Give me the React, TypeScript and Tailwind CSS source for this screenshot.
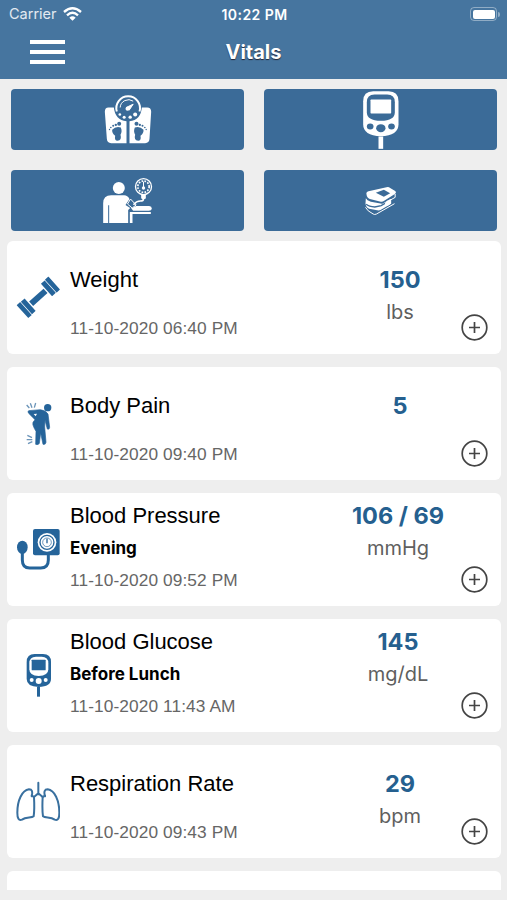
import type { ReactNode } from "react";

type Vital = {
  name: string;
  note?: string;
  date: string;
  value: string;
  unit?: string;
  icon: ReactNode;
};

function ScaleIcon() {
  return (
    <svg className="h-[60px] w-[60px]" viewBox="22.5 13.5 180 180" aria-hidden="true">
      <path
        fill="#fff"
        d="M54 66H70Q74 104 108 107V173H62Q50 173 49 160L43 79Q43 66 54 66ZM154 66H170Q182 66 182 79L177 160Q176 173 164 173H117V107Q151 104 154 66Z"
      />
      <path d="M79 78A35.500 35.500 0 1 1 147 78" fill="none" stroke="#fff" strokeWidth="6" />
      <path d="M89 66A25 25 0 0 1 128 47" fill="none" stroke="#fff" strokeWidth="3" />
      <path d="M107 66L128 56L116 74Z" fill="#fff" stroke="#fff" strokeWidth="3" strokeLinejoin="round" />
      <circle cx="111" cy="70" r="6" fill="#fff" />
      <g fill="#fff">
        <circle cx="88" cy="87" r="4" />
        <circle cx="101" cy="95" r="4.500" />
        <circle cx="119" cy="95" r="5" />
        <circle cx="134" cy="87" r="6" />
      </g>
      <g id="foot" fill="#3b6b98">
        <path d="M65 133Q76 121 91 126Q96 138 90 148Q95 165 81 166Q71 166 74 151Q64 144 65 133Z" />
        <circle cx="86" cy="115" r="6" />
        <circle cx="76" cy="118" r="3.5" />
        <circle cx="68" cy="121" r="3" />
        <circle cx="61" cy="126" r="2.5" />
        <circle cx="57" cy="132" r="2" />
      </g>
      <use href="#foot" transform="translate(224 0) scale(-1 1)" />
    </svg>
  );
}

function MeterIcon() {
  return (
    <svg className="h-[60px] w-[60px]" viewBox="31.5 13.5 180 180" aria-hidden="true">
      <path d="M68 47Q68 17 98 17H144Q174 17 174 47V116Q174 150 121 152Q68 150 68 116Z" fill="#fff" />
      <path d="M79 50Q79 27 102 27H140Q163 27 163 50V80Q163 105 121 106Q79 105 79 80Z" fill="#3b6b98" />
      <rect x="90" y="42" width="62" height="42" rx="2" fill="#fff" />
      <g fill="#3b6b98">
        <ellipse cx="89" cy="123" rx="10" ry="9" />
        <ellipse cx="121" cy="128" rx="14" ry="12" />
        <ellipse cx="153" cy="123" rx="10" ry="9" />
      </g>
      <path d="M114 153H128V190H114Z" fill="#fff" />
    </svg>
  );
}

function CuffPatientIcon() {
  return (
    <svg className="h-[60px] w-[60px]" viewBox="22.5 15 180 180" aria-hidden="true">
      <g fill="#fff">
        <circle cx="85" cy="66" r="18" />
        <path d="M38 112Q38 88 62 88H101Q111 88 117 99L105 117L119 126L113 132V171H56V118H53V171H38Z" />
        <path d="M122 127L137 120H176Q184 121 184 128Q183 134 175 134H128Z" />
        <path d="M118 138H181V144H126V171H118Z" />
        <path d="M120 99L137 117L125 126L111 114Z" fill="#3b6b98" stroke="#fff" strokeWidth="3" />
      </g>
      <g fill="none" stroke="#fff">
        <circle cx="159" cy="62" r="24" strokeWidth="4" />
        <circle cx="159" cy="62" r="17" strokeWidth="5" strokeDasharray="5 4" />
        <path d="M159 68V47" strokeWidth="3" />
        <path d="M159 88V98Q159 105 149 105Q138 105 129 116" strokeWidth="5" />
      </g>
      <circle cx="159" cy="66" r="5" fill="#fff" />
      <rect x="152" y="84" width="14" height="15" rx="4" fill="#fff" />
    </svg>
  );
}

function OximeterIcon() {
  return (
    <svg className="h-[60px] w-[60px]" viewBox="31.5 15 180 180" aria-hidden="true">
      <path d="M78 85Q76 79 84 76L138 64Q144 62 149 66L164 75Q169 79 163 84L130 105Q126 108 121 107L88 99Q79 96 78 85Z" fill="#fff" />
      <path d="M106 80L130 71L149 82L130 92Z" fill="#3b6b98" />
      <path d="M76 97Q79 104 91 107L124 113Q128 114 133 109L152 98V113L120 132Q116 134 110 133L86 128Q77 125 75 113Z" fill="#fff" />
      <path d="M77 115Q85 122 103 123L122 119L146 105" fill="none" stroke="#3b6b98" strokeWidth="4" />
      <path d="M133 111Q139 103 150 100L151 111Q145 121 136 120Z" fill="#fff" />
      <path d="M75 124Q80 135 98 144Q102 147 108 144L162 113" fill="none" stroke="#fff" strokeWidth="3" />
      <path d="M164 84V94L150 102" fill="none" stroke="#fff" strokeWidth="3" />
    </svg>
  );
}

function DumbbellIcon() {
  return (
    <svg className="h-11 w-11" viewBox="48 120 132 132" fill="#25649a" aria-hidden="true">
      <g transform="translate(115 187) rotate(-42)">
        <rect x="-29" y="-9" width="58" height="18" />
        <rect x="-48" y="-25" width="15" height="50" rx="1" />
        <rect x="-64" y="-26" width="14" height="52" rx="1" />
        <rect x="33" y="-25" width="15" height="50" rx="1" />
        <rect x="50" y="-26" width="14" height="52" rx="1" />
      </g>
    </svg>
  );
}

function BodyPainIcon() {
  return (
    <svg className="h-11 w-11" viewBox="48 33 132 132" fill="#25649a" aria-hidden="true">
      <circle cx="143" cy="53" r="11" />
      <path d="M86 62L121 59Q138 61 144 72L149 112Q148 120 142 117L135 91L134 111L138 157Q137 165 129 163L122 129L118 160Q115 167 107 163L108 124Q102 115 99 105Q96 97 105 89L86 70Q82 65 86 62Z" stroke="#25649a" strokeWidth="2" />
      <path d="M101 72L111 71L107 79Z" fill="#fff" />
      <path d="M80 45L88 54M91 40L96 53M107 39L103 53M82 136L96 143M80 149L97 149M84 161L97 155" fill="none" stroke="#6c95b9" strokeWidth="4" />
    </svg>
  );
}

function PressureIcon() {
  return (
    <svg className="h-11 w-11" viewBox="48 111 132 132" fill="none" aria-hidden="true">
      <rect x="99" y="117" width="80" height="79" rx="6" fill="#25649a" />
      <circle cx="141" cy="157" r="28" fill="#fff" />
      <circle cx="141" cy="157" r="21" stroke="#25649a" strokeWidth="4" />
      <circle cx="141" cy="157" r="13" stroke="#25649a" strokeWidth="2" />
      <path d="M141 146V160" stroke="#25649a" strokeWidth="4" />
      <ellipse cx="67" cy="172" rx="16" ry="20" fill="#25649a" />
      <path d="M67 188V210Q67 234 89 234H122Q145 234 145 210V195" stroke="#25649a" strokeWidth="9" />
    </svg>
  );
}

function GlucoseIcon() {
  return (
    <svg className="h-11 w-11" viewBox="48 114 132 132" aria-hidden="true">
      <path d="M80 141Q80 117 104 117H129Q153 117 153 141V192Q153 215 116 216Q80 215 80 192Z" fill="#25649a" />
      <path d="M88 145Q88 125 108 125H125Q145 125 145 145V163Q145 182 116 183Q88 182 88 163Z" fill="#fff" />
      <rect x="95" y="134" width="42" height="32" rx="2" fill="#25649a" />
      <g fill="#fff">
        <circle cx="95" cy="195" r="6" />
        <circle cx="116" cy="198" r="9" />
        <circle cx="137" cy="195" r="6" />
      </g>
      <path d="M111 216H120V245H111Z" fill="#25649a" />
    </svg>
  );
}

function LungsIcon() {
  return (
    <svg className="h-11 w-11" viewBox="48 27 132 132" aria-hidden="true">
      <g fill="none" stroke="#39709f" strokeWidth="6" strokeLinejoin="round" strokeLinecap="round">
        <path d="M115 38V73M115 70L102 81M115 70L128 81" />
        <path d="M95 79Q101 58 87 58C66 61 52 91 52 128C52 145 56 153 66 149C78 140 94 145 101 139Q104 119 102 81L95 76" />
        <path d="M135 79Q129 58 143 58C164 61 178 91 178 128C178 145 174 153 164 149C152 140 136 145 129 139Q126 119 128 81L135 76" />
      </g>
    </svg>
  );
}

const devices = [
  { label: "Scale", icon: <ScaleIcon /> },
  { label: "Glucose meter", icon: <MeterIcon /> },
  { label: "Blood pressure cuff", icon: <CuffPatientIcon /> },
  { label: "Pulse oximeter", icon: <OximeterIcon /> },
];

const vitals: Vital[] = [
  { name: "Weight", date: "11-10-2020 06:40 PM", value: "150", unit: "lbs", icon: <DumbbellIcon /> },
  { name: "Body Pain", date: "11-10-2020 09:40 PM", value: "5", icon: <BodyPainIcon /> },
  { name: "Blood Pressure", note: "Evening", date: "11-10-2020 09:52 PM", value: "106 / 69", unit: "mmHg", icon: <PressureIcon /> },
  { name: "Blood Glucose", note: "Before Lunch", date: "11-10-2020 11:43 AM", value: "145", unit: "mg/dL", icon: <GlucoseIcon /> },
  { name: "Respiration Rate", date: "11-10-2020 09:43 PM", value: "29", unit: "bpm", icon: <LungsIcon /> },
];

function StatusBar() {
  return (
    <div className="grid h-7 grid-cols-3 items-center pr-[7px] pl-[9px] text-white">
      <div className="flex items-center gap-[6px]">
        <span className="text-[14.5px] text-white/85">Carrier</span>
        <svg className="h-[14px] w-[19px]" viewBox="0 0 57 42" fill="none" stroke="#fff" strokeWidth="7" aria-hidden="true">
          <path d="M3 15Q28.500 -7 54 15M12 25Q28.500 10 45 25" />
          <path d="M19 32Q28.500 24 38 32L28.500 41Z" fill="#fff" stroke="none" />
        </svg>
      </div>
      <span className="text-center text-[14px] font-semibold tracking-[0.45px] whitespace-nowrap">10:22 PM</span>
      <div className="flex items-center justify-end gap-px">
        <span className="flex h-[14px] w-[27px] items-center justify-center rounded-[4px] border border-white/40">
          <span className="h-[9px] w-[22px] rounded-[2px] bg-white" />
        </span>
        <span className="h-[5px] w-[2px] rounded-r-full bg-white/40" />
      </div>
    </div>
  );
}

function VitalCard({ vital }: { vital: Vital }) {
  const detailed = Boolean(vital.note);

  return (
    <article className="flex h-[113.500px] shrink-0 rounded-[6px] bg-white">
      <div className="w-[63px] shrink-0 pt-[34px] pl-[9px]">{vital.icon}</div>
      <div className={detailed ? "w-[269px] shrink-0 pt-[7px]" : "w-[269px] shrink-0 pt-[15px]"}>
        <h2
          className={[
            "font-['Liberation_Sans',sans-serif] text-[22px] whitespace-nowrap text-black",
            detailed ? "leading-8" : "leading-[48px]",
          ].join(" ")}
        >
          {vital.name}
        </h2>
        {vital.note && <p className="text-[17px] leading-8 font-bold text-black">{vital.note}</p>}
        <p
          className={[
            "font-['Liberation_Sans',sans-serif] text-[17.300px] tracking-[0.1px] whitespace-nowrap text-[#666]",
            detailed ? "leading-8" : "leading-[48px]",
          ].join(" ")}
        >
          {vital.date}
        </p>
      </div>
      <div
        className={[
          "shrink-0 text-center whitespace-nowrap",
          detailed ? "w-[118px] pt-[6px] leading-[33px]" : "w-[122px] pt-[22px] leading-[33px]",
        ].join(" ")}
      >
        <p className="text-[23.500px] font-bold text-[#25608f]">{vital.value}</p>
        {vital.unit && <p className="text-[20px] text-[#5f5f5f]">{vital.unit}</p>}
      </div>
      <button
        type="button"
        aria-label="Add"
        className="mt-[73px] mr-[13px] ml-auto h-[27px] w-[27px] shrink-0"
      >
        <svg viewBox="0 0 27 27" fill="none" stroke="#444" strokeWidth="1.700" aria-hidden="true">
          <circle cx="13.500" cy="13.500" r="12.300" />
          <path d="M13.500 8V19M8 13.500H19" />
        </svg>
      </button>
    </article>
  );
}

export default function App() {
  return (
    <div className="flex h-[900px] w-[507px] flex-col overflow-hidden bg-[#eeeeee] font-['Inter',sans-serif]">
      <header className="h-[79px] shrink-0 bg-[#46759f]">
        <StatusBar />
        <div className="grid h-12 grid-cols-3 items-center">
          <button type="button" aria-label="Menu" className="ml-[30px] flex w-[35px] flex-col gap-[6px]">
            <span className="h-[4px] bg-white" />
            <span className="h-[4px] bg-white" />
            <span className="h-[4px] bg-white" />
          </button>
          <h1 className="text-center text-[20px] font-bold text-white [text-shadow:0_1px_1px_#223]">Vitals</h1>
        </div>
      </header>
      <div className="grid shrink-0 grid-cols-2 gap-x-[20px] gap-y-[20px] pt-[10px] pr-[10px] pl-[11px]">
        {devices.map((device) => (
          <button
            key={device.label}
            type="button"
            aria-label={device.label}
            className="flex h-[61px] items-center justify-center rounded-[4px] bg-[#3b6b98]"
          >
            {device.icon}
          </button>
        ))}
      </div>
      <main className="mt-[9.500px] mb-[10px] flex min-h-0 flex-1 flex-col gap-[12.500px] overflow-hidden pr-[6px] pl-[7px]">
        {vitals.map((vital) => (
          <VitalCard key={vital.name} vital={vital} />
        ))}
        <article className="h-[113.500px] shrink-0 rounded-[6px] bg-white" />
      </main>
    </div>
  );
}
